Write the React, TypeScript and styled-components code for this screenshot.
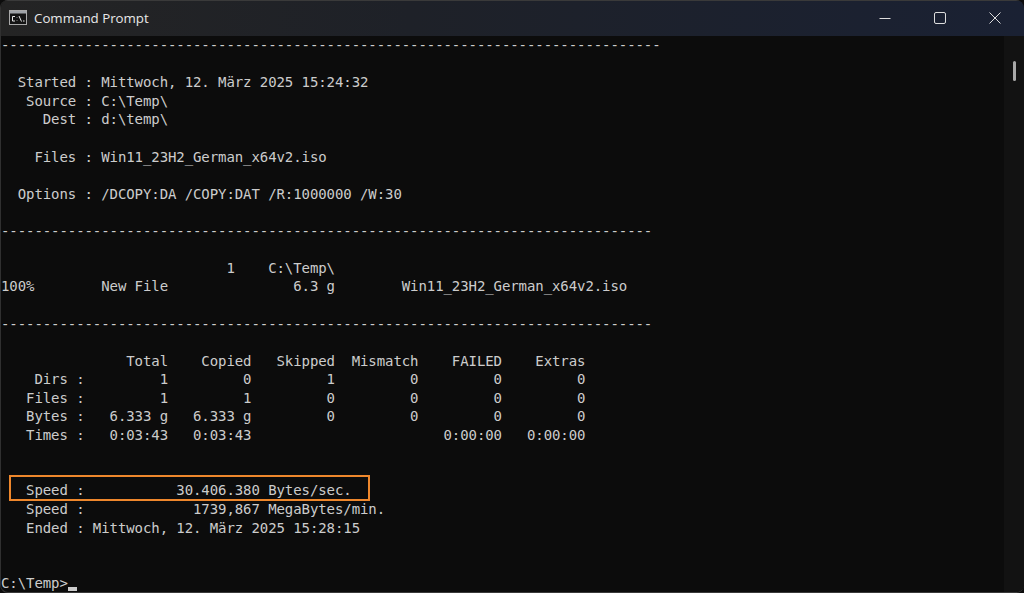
import React from "react";
import styled, { createGlobalStyle } from "styled-components";

const Global = createGlobalStyle`
  html, body { margin: 0; padding: 0; background: #0c0c0c; overflow: hidden; }
`;
const Win = styled.div`
  width: 1024px; height: 593px; box-sizing: border-box; display: flex; flex-direction: column;
  background: #0c0c0c; overflow: hidden;
  border-left: 1px solid #303030; border-bottom: 1px solid #3a3a3a;
  border-radius: 8px 8px 8px 8px;
`;
const TitleBar = styled.div`
  height: 36px; flex: none; background: linear-gradient(90deg, #242424 0%, #1e2128 40%, #1a2133 100%);
  display: flex; align-items: center; padding: 0 0 2px 8px;
  border-top: 1px solid #3a3a3a; box-sizing: border-box;
`;
const Title = styled.span`
  font: 13.3px "Open Sans", "Noto Sans", sans-serif; color: #e8e8e8; margin-left: 7px; flex: 1;
`;
const Ctl = styled.div`
  width: 55px; display: flex; align-items: center; justify-content: center;
`;
const Controls = styled.div`
  display: flex; align-self: stretch; margin-right: 2px;
`;
const Body = styled.div`
  flex: 1; display: flex; min-height: 0;
`;
const Term = styled.pre`
  flex: 1; margin: 0; position: relative; padding-top: 0.3px;
  font: 14px/18.55px "DejaVu Sans Mono", monospace; letter-spacing: -0.08px; color: #cccccc;
`;
const Highlight = styled.div`
  position: absolute; left: 8px; top: 439px; width: 357px; height: 22px; border: 2px solid #ee872c;
`;
const Cursor = styled.div`
  position: absolute; left: 67px; top: 551px; width: 9px; height: 4px; background: #cccccc;
`;
const Rail = styled.div`
  width: 20px; flex: none; display: flex; justify-content: center; padding-top: 25px; background: #121212;
`;
const Thumb = styled.div`
  width: 3px; height: 20px; border-radius: 2px; background: #a8a8a8;
`;
const text = `-------------------------------------------------------------------------------

  Started : Mittwoch, 12. März 2025 15:24:32
   Source : C:\\Temp\\
     Dest : d:\\temp\\

    Files : Win11_23H2_German_x64v2.iso

  Options : /DCOPY:DA /COPY:DAT /R:1000000 /W:30

------------------------------------------------------------------------------

                           1    C:\\Temp\\
100%        New File               6.3 g        Win11_23H2_German_x64v2.iso

------------------------------------------------------------------------------

               Total    Copied   Skipped  Mismatch    FAILED    Extras
    Dirs :         1         0         1         0         0         0
   Files :         1         1         0         0         0         0
   Bytes :   6.333 g   6.333 g         0         0         0         0
   Times :   0:03:43   0:03:43                       0:00:00   0:00:00


   Speed :           30.406.380 Bytes/sec.
   Speed :             1739,867 MegaBytes/min.
   Ended : Mittwoch, 12. März 2025 15:28:15


C:\\Temp>`;
export default function App() {
  return (
    <Win>
      <Global />
      <TitleBar>
        <svg width="18" height="15" viewBox="0 0 18 15">
          <rect x="0.5" y="0.5" width="17" height="14" fill="#141414" stroke="#a9a9a9" />
          <rect x="1" y="1" width="16" height="2.5" fill="#9fa3a8" />
          <path d="M6 6.5H3.5V11H6M8 7.5v.5M8 10.5v.5M10 6l2.5 5.5M14 11h1.5" fill="none" stroke="#e6e6e6" />
        </svg>
        <Title>Command Prompt</Title>
        <Controls>
          <Ctl><svg width="12" height="12"><path d="M0.5 6.5h11" stroke="#ddd" strokeWidth="1" /></svg></Ctl>
          <Ctl><svg width="12" height="12"><rect x="0.5" y="0.5" width="11" height="11" rx="1.5" fill="none" stroke="#ddd" /></svg></Ctl>
          <Ctl><svg width="12" height="12"><path d="M0.5 0.5l11 11M11.5 0.5l-11 11" stroke="#ddd" /></svg></Ctl>
        </Controls>
      </TitleBar>
      <Body>
        <Term>{text}<Highlight /><Cursor /></Term>
        <Rail><Thumb /></Rail>
      </Body>
    </Win>
  );
}
